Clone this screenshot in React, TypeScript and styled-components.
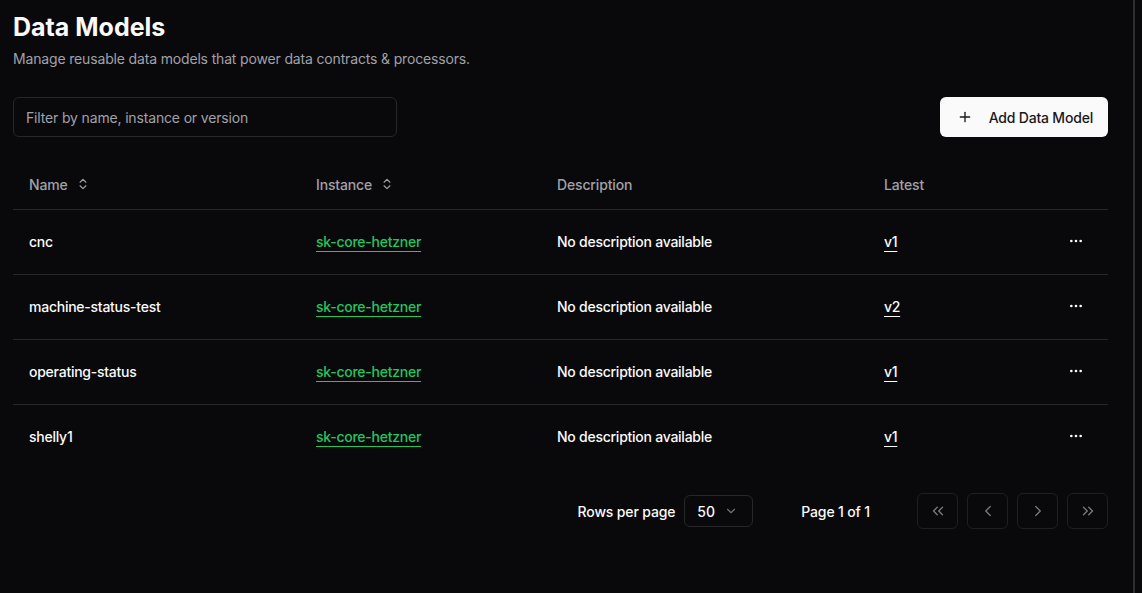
import React from "react";
import styled, { createGlobalStyle } from "styled-components";
import {
  ChevronsUpDown,
  MoreHorizontal,
  Plus,
  ChevronDown,
  ChevronsLeft,
  ChevronLeft,
  ChevronRight,
  ChevronsRight,
} from "lucide-react";

const Global = createGlobalStyle`
  html, body { margin: 0; padding: 0; background: #09090b; }
  body { font-family: Inter, "Noto Sans", sans-serif; color: #fafafa; -webkit-font-smoothing: antialiased; }
  * { box-sizing: border-box; }
`;

const Shell = styled.div`
  display: flex;
  width: 1142px;
  height: 593px;
  background: #09090b;
  overflow: hidden;
`;

const Main = styled.main`
  width: 1133px;
  flex: none;
  padding: 11px 25px 0 13px;
`;

const Divider = styled.div`
  width: 2px;
  flex: none;
  background: #2e2e31;
`;

const Title = styled.h1`
  margin: 0;
  font-size: 25px;
  line-height: 32px;
  font-weight: 700;
  letter-spacing: 0;
  color: #fafafa;
`;

const Subtitle = styled.p`
  margin: 6px 0 0;
  font-size: 14px;
  line-height: 20px;
  letter-spacing: -0.16px;
  color: #a1a1aa;
`;

const Toolbar = styled.div`
  margin-top: 28px;
  display: flex;
  align-items: center;
  justify-content: space-between;
`;

const Filter = styled.input`
  width: 384px;
  height: 40px;
  border-radius: 6px;
  border: 1px solid #27272a;
  background: #09090b;
  padding: 0 12px;
  font-family: inherit;
  font-size: 14px;
  letter-spacing: -0.16px;
  color: #fafafa;
  outline: none;
  &::placeholder { color: #a1a1aa; }
`;

const PrimaryButton = styled.button`
  height: 40px;
  display: inline-flex;
  align-items: center;
  gap: 16px;
  padding: 0 15px 0 17px;
  border: none;
  border-radius: 6px;
  background: #fafafa;
  color: #18181b;
  font-family: inherit;
  font-size: 14px;
  font-weight: 500;
  letter-spacing: -0.2px;
`;

const Table = styled.div`
  margin-top: 24px;
  display: grid;
  grid-template-columns: 287px 241px 327px 1fr 64px;
`;

const HeadCell = styled.div`
  height: 49px;
  display: flex;
  align-items: center;
  gap: 8px;
  padding: 0 16px 2px;
  font-size: 14px;
  font-weight: 500;
  letter-spacing: -0.15px;
  color: #a1a1aa;
  border-bottom: 1px solid #27272a;
`;

const Cell = styled.div<{ $last?: boolean; $end?: boolean }>`
  height: ${(p) => (p.$last ? "64px" : "65px")};
  display: flex;
  align-items: center;
  justify-content: ${(p) => (p.$end ? "flex-end" : "flex-start")};
  padding: 0 16px 2px;
  font-size: 14px;
  font-weight: 500;
  letter-spacing: -0.25px;
  color: #fafafa;
  border-bottom: ${(p) => (p.$last ? "none" : "1px solid #27272a")};
`;

const Link = styled.a<{ $tone: "green" | "white" }>`
  color: ${(p) => (p.$tone === "green" ? "#22c55e" : "#fafafa")};
  text-decoration: underline;
  text-underline-offset: 4px;
  text-decoration-thickness: 1px;
  cursor: pointer;
`;

const IconButton = styled.button`
  width: 32px;
  height: 32px;
  display: inline-flex;
  align-items: center;
  justify-content: center;
  border: none;
  background: transparent;
  color: #fafafa;
  padding: 0;
`;

const Pagination = styled.div`
  margin-top: 24px;
  display: flex;
  align-items: center;
  justify-content: flex-end;
`;

const Label = styled.span`
  font-size: 14px;
  font-weight: 500;
  letter-spacing: -0.15px;
  color: #fafafa;
`;

const RowsGroup = styled.div`
  display: flex;
  align-items: center;
  gap: 9px;
  margin-right: 48px;
`;

const Select = styled.div`
  width: 69px;
  height: 32px;
  border: 1px solid #27272a;
  border-radius: 6px;
  display: flex;
  align-items: center;
  justify-content: space-between;
  padding: 0 14px 0 12px;
  font-size: 14px;
  font-weight: 500;
  color: #fafafa;
  svg { color: #71717a; }
`;

const PageLabel = styled(Label)`
  margin-right: 47px;
`;

const PagerGroup = styled.div`
  display: flex;
  gap: 9px;
`;

const PagerButton = styled.button`
  width: 41px;
  height: 36px;
  border: 1px solid #1f1f22;
  border-radius: 6px;
  background: transparent;
  display: inline-flex;
  align-items: center;
  justify-content: center;
  color: #7a7a7f;
  padding: 0;
`;

const rows = [
  { name: "cnc", version: "v1" },
  { name: "machine-status-test", version: "v2" },
  { name: "operating-status", version: "v1" },
  { name: "shelly1", version: "v1" },
];

export default function App() {
  return (
    <Shell>
      <Global />
      <Main>
        <Title>Data Models</Title>
        <Subtitle>Manage reusable data models that power data contracts &amp; processors.</Subtitle>
        <Toolbar>
          <Filter placeholder="Filter by name, instance or version" />
          <PrimaryButton>
            <Plus size={16} strokeWidth={2} />
            Add Data Model
          </PrimaryButton>
        </Toolbar>
        <Table>
          <HeadCell>
            Name <ChevronsUpDown size={14} strokeWidth={2} />
          </HeadCell>
          <HeadCell>
            Instance <ChevronsUpDown size={14} strokeWidth={2} />
          </HeadCell>
          <HeadCell>Description</HeadCell>
          <HeadCell>Latest</HeadCell>
          <HeadCell />
          {rows.map((r, i) => {
            const last = i === rows.length - 1;
            return (
              <React.Fragment key={r.name}>
                <Cell $last={last}>{r.name}</Cell>
                <Cell $last={last}>
                  <Link $tone="green">sk-core-hetzner</Link>
                </Cell>
                <Cell $last={last}>No description available</Cell>
                <Cell $last={last}>
                  <Link $tone="white">{r.version}</Link>
                </Cell>
                <Cell $last={last} $end>
                  <IconButton>
                    <MoreHorizontal size={16} strokeWidth={2} />
                  </IconButton>
                </Cell>
              </React.Fragment>
            );
          })}
        </Table>
        <Pagination>
          <RowsGroup>
            <Label>Rows per page</Label>
            <Select>
              50 <ChevronDown size={14} strokeWidth={2} />
            </Select>
          </RowsGroup>
          <PageLabel>Page 1 of 1</PageLabel>
          <PagerGroup>
            <PagerButton>
              <ChevronsLeft size={18} strokeWidth={1.75} />
            </PagerButton>
            <PagerButton>
              <ChevronLeft size={18} strokeWidth={1.75} />
            </PagerButton>
            <PagerButton>
              <ChevronRight size={18} strokeWidth={1.75} />
            </PagerButton>
            <PagerButton>
              <ChevronsRight size={18} strokeWidth={1.75} />
            </PagerButton>
          </PagerGroup>
        </Pagination>
      </Main>
      <Divider />
    </Shell>
  );
}
